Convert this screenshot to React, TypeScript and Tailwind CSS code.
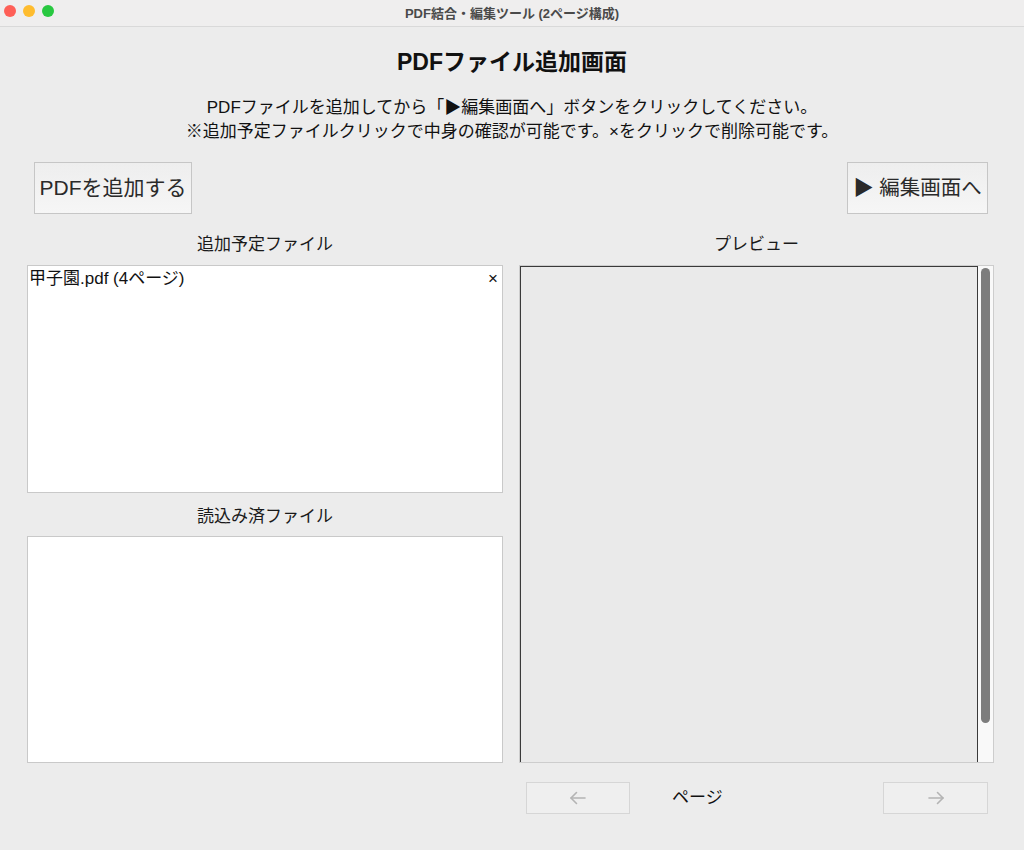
import React from "react";

const font = { fontFamily: '"Liberation Sans", "Noto Sans CJK JP", sans-serif' };

function Arrow({ dir }: { dir: "left" | "right" }) {
  return (
    <svg width="18" height="14" viewBox="0 0 18 14" fill="none" stroke="#b4b4b4" strokeWidth="1.6" strokeLinecap="round" strokeLinejoin="round">
      {dir === "left" ? (
        <>
          <path d="M16 7H2" />
          <path d="M7.5 1.5L2 7l5.5 5.5" />
        </>
      ) : (
        <>
          <path d="M2 7h14" />
          <path d="M10.5 1.5L16 7l-5.5 5.5" />
        </>
      )}
    </svg>
  );
}

export default function App() {
  return (
    <div className="w-[1024px] h-[850px] bg-[#ececec] flex flex-col text-[#111]" style={font}>
      {/* Title bar */}
      <div className="relative h-[27px] bg-[#efeeee] border-b border-[#d9d9d9] flex items-center justify-center shrink-0">
        <div className="absolute left-[4px] top-[5px] flex gap-[7px]">
          <span className="w-[12px] h-[12px] rounded-full bg-[#fe5f57]" />
          <span className="w-[12px] h-[12px] rounded-full bg-[#febc2e]" />
          <span className="w-[12px] h-[12px] rounded-full bg-[#28c840]" />
        </div>
        <span className="text-[13px] font-bold text-[#4a4a4a] leading-none">PDF結合・編集ツール (2ページ構成)</span>
      </div>

      {/* Heading */}
      <div className="pt-[20px] text-center text-[23px] font-bold leading-[30px]">PDFファイル追加画面</div>

      {/* Instructions */}
      <div className="mt-[19px] text-center text-[17px] leading-[24px] text-[#111]">
        <div>PDFファイルを追加してから「▶編集画面へ」ボタンをクリックしてください。</div>
        <div>※追加予定ファイルクリックで中身の確認が可能です。×をクリックで削除可能です。</div>
      </div>

      {/* Buttons row */}
      <div className="mt-[18px] flex justify-between pl-[34px] pr-[36px]">
        <button className="w-[158px] h-[52px] border border-[#c6c6c6] bg-gradient-to-b from-[#eeeeee] to-[#f6f6f6] text-[21px] text-[#2a2a2a]">
          PDFを追加する
        </button>
        <button className="w-[141px] h-[52px] border border-[#c6c6c6] bg-gradient-to-b from-[#eeeeee] to-[#f6f6f6] text-[20.5px] text-[#2a2a2a]">
          ▶ 編集画面へ
        </button>
      </div>

      {/* Columns */}
      <div className="mt-[21px] flex gap-[16px] pl-[27px] pr-[30px]">
        {/* Left */}
        <div className="w-[476px] flex flex-col">
          <div className="h-[20px] leading-[20px] text-center text-[17px] text-[#1a1a1a]">追加予定ファイル</div>
          <div className="mt-[10px] h-[228px] bg-white border border-[#c9c9c9]">
            <div className="flex items-center justify-between pl-[1px] pr-[4px] h-[26px] text-[17px] text-[#111]">
              <span>甲子園.pdf (4ページ)</span>
              <span className="text-[17px]">×</span>
            </div>
          </div>
          <div className="mt-[14px] h-[20px] leading-[20px] text-center text-[17px] text-[#1a1a1a]">読込み済ファイル</div>
          <div className="mt-[9px] h-[227px] bg-white border border-[#c9c9c9]" />
        </div>

        {/* Right */}
        <div className="w-[475px] flex flex-col">
          <div className="h-[20px] leading-[20px] text-center text-[17px] text-[#1a1a1a]">プレビュー</div>
          <div className="mt-[10px] h-[498px] border border-[#cdcdcd] flex">
            <div className="flex-1 bg-[#eaeaea] border-l border-t border-r border-[#3a3a3a]" />
            <div className="w-[15px] bg-[#f9f9f9] flex justify-center pt-[2px]">
              <div className="w-[9px] h-[455px] rounded-full bg-[#7d7d7d]" />
            </div>
          </div>
          <div className="mt-[19px] flex items-center pl-[7px] pr-[6px]">
            <button className="w-[104px] h-[32px] border border-[#d6d6d6] bg-[#efefef] flex items-center justify-center">
              <Arrow dir="left" />
            </button>
            <span className="ml-[42px] text-[17px] text-[#111]">ページ</span>
            <div className="flex-1" />
            <button className="w-[105px] h-[32px] border border-[#d6d6d6] bg-[#efefef] flex items-center justify-center">
              <Arrow dir="right" />
            </button>
          </div>
        </div>
      </div>
    </div>
  );
}
